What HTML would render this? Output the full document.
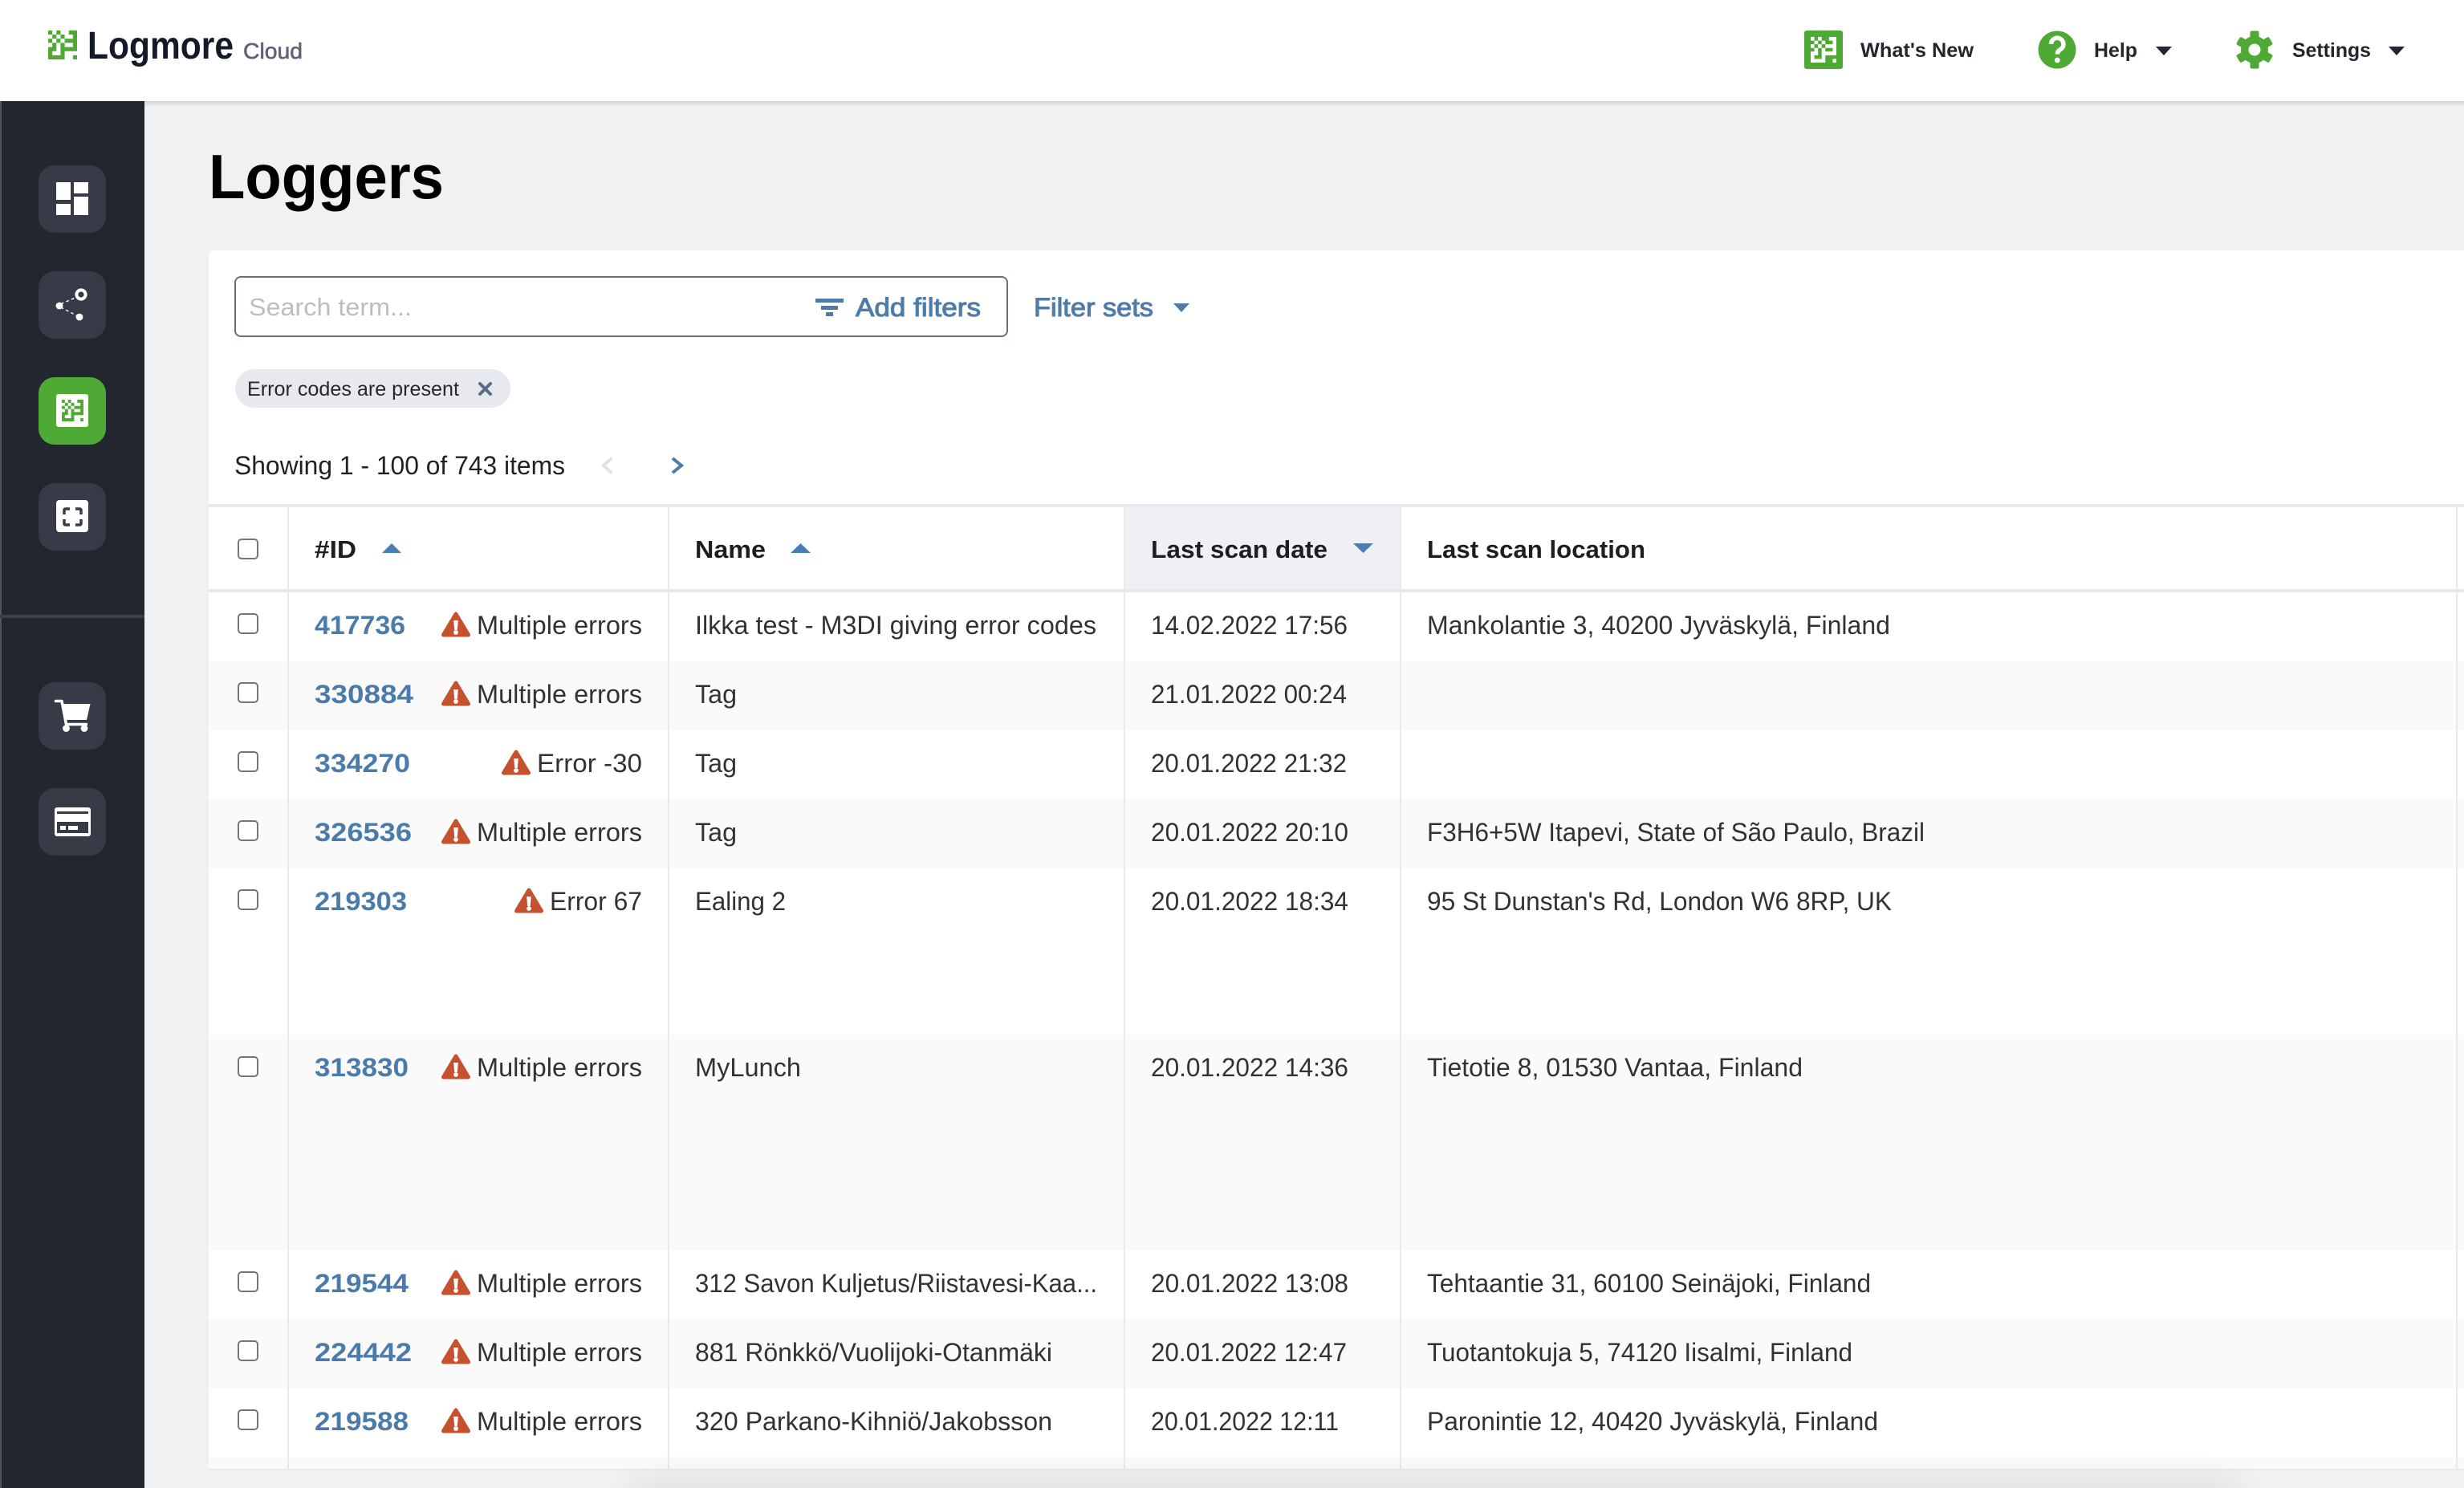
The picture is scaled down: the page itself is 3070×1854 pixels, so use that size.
<!DOCTYPE html>
<html lang="en"><head><meta charset="utf-8"><title>Loggers</title>
<style>
html,body{margin:0;padding:0;background:#f0f1f3;width:3070px;height:1854px;overflow:hidden}
svg{display:block}
text{font-family:"Liberation Sans",sans-serif;white-space:pre}
.r{font-size:32px;fill:#303236}
.i{font-size:32px;font-weight:700;fill:#4a7baa}
.h{font-size:31px;font-weight:700;fill:#1c1e21}
.t{font-size:25px;font-weight:700;fill:#22262e}
.b{font-size:32px;fill:#4d7cab;stroke:#4d7cab;stroke-width:1}
</style></head><body>
<svg xmlns="http://www.w3.org/2000/svg" width="3070" height="1854" viewBox="0 0 3070 1854">
<defs>
<linearGradient id="sh" x1="0" y1="0" x2="0" y2="1"><stop offset="0" stop-color="#000" stop-opacity=".13"/><stop offset="1" stop-color="#000" stop-opacity="0"/></linearGradient>
<filter id="bl" x="-10%" y="-200%" width="120%" height="500%"><feGaussianBlur stdDeviation="22"/></filter>
<symbol id="lg" viewBox="0 0 7 7"><path d="M0 0h1v1h-1zM2 0h1v1h-1zM5 0h2v1h-2zM1 1h1v1h-1zM3 1h1v1h-1zM6 1h1v1h-1zM0 2h1v1h-1zM2 2h1v1h-1zM4 2h3v1h-3zM1 3h1v1h-1zM3 3h1v1h-1zM6 3h1v1h-1zM0 4h2v1h-2zM3 4h4v1h-4zM0 5h1v1h-1zM3 5h1v1h-1zM0 6h4v1h-4zM6 6h1v1h-1z"/></symbol>
<symbol id="w" viewBox="0 0 36 32"><path d="M18 3 33.5 29H2.5z" fill="#c5512f" stroke="#c5512f" stroke-width="5" stroke-linejoin="round"/><path d="M15.2 11h5.6l-1 12h-3.6z" fill="#fff"/><circle cx="18" cy="26" r="2.9" fill="#fff"/></symbol>
<symbol id="c" viewBox="0 0 26 26"><rect x="1" y="1" width="24" height="24" rx="4" fill="#fff" stroke="#767676" stroke-width="2"/></symbol>
</defs>

<rect width="3070" height="1854" fill="#f0f1f3"/>
<rect y="126" width="3070" height="7" fill="url(#sh)"/>
<rect width="3070" height="126" fill="#fff"/>

<!-- logo -->
<use href="#lg" x="60" y="38" width="36" height="36" fill="#4fa935"/>
<text x="109" y="73" font-size="48" font-weight="700" fill="#141a28" textLength="182" lengthAdjust="spacingAndGlyphs">Logmore</text>
<text x="303" y="73" font-size="28" fill="#5c6375" stroke="#5c6375" stroke-width=".6" textLength="74" lengthAdjust="spacingAndGlyphs">Cloud</text>

<!-- top right -->
<rect x="2248" y="38" width="48" height="48" rx="3" fill="#4fa935"/>
<use href="#lg" x="2256" y="46" width="32" height="32" fill="#fff"/>
<text class="t" x="2318" y="71" textLength="141" lengthAdjust="spacingAndGlyphs">What's New</text>
<circle cx="2563" cy="62" r="23.5" fill="#4fa935"/>
<path d="M2555.5 55a7.7 7.7 0 1 1 11.8 6.5c-2.6 1.7-3.9 3-3.9 6" fill="none" stroke="#fff" stroke-width="5.5"/>
<circle cx="2563.3" cy="75" r="3.4" fill="#fff"/>
<text class="t" x="2609" y="71" textLength="54" lengthAdjust="spacingAndGlyphs">Help</text>
<path d="M2686 58h20l-10 11z" fill="#22262e"/>
<g fill="#4fa935" transform="translate(2809 62)">
<path fill-rule="evenodd" d="M-17 0a17 17 0 1 0 34 0a17 17 0 1 0-34 0zM-7.5 0a7.5 7.5 0 1 1 15 0a7.5 7.5 0 1 1-15 0z"/>
<rect x="-5.5" y="-23.5" width="11" height="9" rx="2"/>
<rect x="-5.5" y="-23.5" width="11" height="9" rx="2" transform="rotate(60)"/>
<rect x="-5.5" y="-23.5" width="11" height="9" rx="2" transform="rotate(120)"/>
<rect x="-5.5" y="-23.5" width="11" height="9" rx="2" transform="rotate(180)"/>
<rect x="-5.5" y="-23.5" width="11" height="9" rx="2" transform="rotate(240)"/>
<rect x="-5.5" y="-23.5" width="11" height="9" rx="2" transform="rotate(300)"/>
</g>
<text class="t" x="2856" y="71" textLength="98" lengthAdjust="spacingAndGlyphs">Settings</text>
<path d="M2976 58h20l-10 11z" fill="#22262e"/>

<!-- sidebar -->
<rect y="126" width="180" height="1728" fill="#22262e"/>
<rect y="126" width="2" height="1728" fill="#52555c"/>
<rect y="766" width="180" height="4" fill="#3a3f4b"/>
<rect x="48" y="206" width="84" height="84" rx="20" fill="#363b47"/>
<rect x="48" y="338" width="84" height="84" rx="20" fill="#363b47"/>
<rect x="48" y="470" width="84" height="84" rx="20" fill="#4fa935"/>
<rect x="48" y="602" width="84" height="84" rx="20" fill="#363b47"/>
<rect x="48" y="850" width="84" height="84" rx="20" fill="#363b47"/>
<rect x="48" y="982" width="84" height="84" rx="20" fill="#363b47"/>
<g fill="#fff">
<rect x="70" y="227" width="18" height="22"/><rect x="70" y="254" width="18" height="14"/>
<rect x="92" y="227" width="18" height="14"/><rect x="92" y="245" width="18" height="23"/>
<circle cx="74" cy="381" r="4.4"/><circle cx="99" cy="395" r="4.4"/>
<path d="M76 378.500 96 370M76 383l21 11" stroke="#fff" stroke-width="1.500" stroke-dasharray="3.500 3.500" fill="none"/>
</g>
<circle cx="101" cy="367" r="5.6" fill="#363b47" stroke="#fff" stroke-width="4"/>
<rect x="70" y="491" width="40" height="41" rx="3" fill="#fff"/>
<use href="#lg" x="77" y="498" width="27" height="27" fill="#4fa935"/>
<rect x="70" y="623" width="40" height="40" rx="4" fill="#fff"/>
<path d="M80 641v-5q0-2 2-2h5M94 634h5q2 0 2 2v5M101 647v5q0 2-2 2h-5M87 654h-5q-2 0-2-2v-5" fill="none" stroke="#363b47" stroke-width="3.500"/>
<path d="M69.500 873.500h7.500l5.500 29h25" fill="none" stroke="#fff" stroke-width="3.500" stroke-linecap="round" stroke-linejoin="round"/>
<path d="M77 877H112.500L108 897H81z" fill="#fff"/>
<circle cx="82.500" cy="907.500" r="4.400" fill="#fff"/><circle cx="105" cy="907.500" r="4.400" fill="#fff"/>
<rect x="68" y="1006" width="45" height="36" rx="3" fill="#fff"/>
<rect x="71" y="1011" width="39" height="3" fill="#363b47"/>
<rect x="71" y="1024" width="39" height="14" fill="#363b47"/>
<rect x="75" y="1029" width="7" height="5" fill="#fff"/><rect x="85" y="1029" width="12" height="5" fill="#fff"/>

<!-- title -->
<text x="260" y="247" font-size="78" font-weight="700" fill="#000" textLength="293" lengthAdjust="spacingAndGlyphs">Loggers</text>

<!-- card -->
<path d="M260 1832V320q0-8 8-8H3070V1832z" fill="#fff"/>
<rect x="293" y="345" width="962" height="74" rx="7" fill="#fff" stroke="#66707f" stroke-width="2"/>
<text x="310" y="393" font-size="31" fill="#bdbdbd" textLength="203" lengthAdjust="spacingAndGlyphs">Search term...</text>
<g fill="#4d7cab"><rect x="1016" y="372" width="35" height="5"/><rect x="1023" y="381" width="21" height="5"/><rect x="1029" y="389" width="9" height="5"/></g>
<text class="b" x="1066" y="394" textLength="156" lengthAdjust="spacingAndGlyphs">Add filters</text>
<text class="b" x="1288" y="394" textLength="149" lengthAdjust="spacingAndGlyphs">Filter sets</text>
<path d="M1462 378h20l-10 11z" fill="#4d7cab"/>
<rect x="293" y="460" width="343" height="48" rx="24" fill="#e8e9ee"/>
<text x="308" y="493" font-size="25" fill="#26282c" textLength="264" lengthAdjust="spacingAndGlyphs">Error codes are present</text>
<path d="M598 478 611 491M611 478 598 491" stroke="#5c6b85" stroke-width="4" stroke-linecap="round"/>
<text x="292" y="591" font-size="32" fill="#1f2125" textLength="412" lengthAdjust="spacingAndGlyphs">Showing 1 - 100 of 743 items</text>
<path d="M762 571 752 580 762 589" fill="none" stroke="#e0e1e3" stroke-width="4"/>
<path d="M838 571 849 580 838 589" fill="none" stroke="#4d7cab" stroke-width="4"/>

<!-- table backgrounds -->
<rect x="1400" y="632" width="344" height="102" fill="#eff0f3"/>
<g fill="#fafafa">
<rect x="260" y="824" width="2810" height="86"/>
<rect x="260" y="996" width="2810" height="86"/>
<rect x="260" y="1289" width="2810" height="269"/>
<rect x="260" y="1644" width="2810" height="86"/>
<rect x="260" y="1816" width="2810" height="14"/>
</g>
<g fill="#e8e9ed">
<rect x="358" y="632" width="2" height="1198"/>
<rect x="832" y="632" width="2" height="1198"/>
<rect x="1400" y="632" width="2" height="1198"/>
<rect x="1744" y="632" width="2" height="1198"/>
<rect x="3060" y="632" width="2" height="1198"/>
<rect x="260" y="628" width="2810" height="4"/>
<rect x="260" y="734" width="2810" height="4"/>
<rect x="260" y="1830" width="2810" height="2"/>
</g>

<!-- header -->
<use href="#c" x="296" y="671" width="26" height="26"/>
<text class="h" x="392" y="695" textLength="52" lengthAdjust="spacingAndGlyphs">#ID</text>
<path d="M476 689 488 677 500 689z" fill="#4a7db4"/>
<text class="h" x="866" y="695" textLength="88" lengthAdjust="spacingAndGlyphs">Name</text>
<path d="M985 689 997.500 677 1010 689z" fill="#4a7db4"/>
<text class="h" x="1434" y="695" textLength="220" lengthAdjust="spacingAndGlyphs">Last scan date</text>
<path d="M1686 677H1711L1698.500 689z" fill="#4a7db4"/>
<text class="h" x="1778" y="695" textLength="272" lengthAdjust="spacingAndGlyphs">Last scan location</text>

<!-- row 1 -->
<use href="#c" x="296" y="764" width="26" height="26"/>
<text class="i" x="392" y="790" textLength="113" lengthAdjust="spacingAndGlyphs">417736</text>
<use href="#w" x="550" y="762" width="36" height="32"/>
<text class="r" x="594" y="790" textLength="206" lengthAdjust="spacingAndGlyphs">Multiple errors</text>
<text class="r" x="866" y="790" textLength="500" lengthAdjust="spacingAndGlyphs">Ilkka test - M3DI giving error codes</text>
<text class="r" x="1434" y="790" textLength="245" lengthAdjust="spacingAndGlyphs">14.02.2022 17:56</text>
<text class="r" x="1778" y="790" textLength="577" lengthAdjust="spacingAndGlyphs">Mankolantie 3, 40200 Jyväskylä, Finland</text>
<!-- row 2 -->
<use href="#c" x="296" y="850" width="26" height="26"/>
<text class="i" x="392" y="876" textLength="123" lengthAdjust="spacingAndGlyphs">330884</text>
<use href="#w" x="550" y="848" width="36" height="32"/>
<text class="r" x="594" y="876" textLength="206" lengthAdjust="spacingAndGlyphs">Multiple errors</text>
<text class="r" x="866" y="876" textLength="52" lengthAdjust="spacingAndGlyphs">Tag</text>
<text class="r" x="1434" y="876" textLength="244" lengthAdjust="spacingAndGlyphs">21.01.2022 00:24</text>
<!-- row 3 -->
<use href="#c" x="296" y="936" width="26" height="26"/>
<text class="i" x="392" y="962" textLength="119" lengthAdjust="spacingAndGlyphs">334270</text>
<use href="#w" x="625" y="934" width="36" height="32"/>
<text class="r" x="669" y="962" textLength="131" lengthAdjust="spacingAndGlyphs">Error -30</text>
<text class="r" x="866" y="962" textLength="52" lengthAdjust="spacingAndGlyphs">Tag</text>
<text class="r" x="1434" y="962" textLength="244" lengthAdjust="spacingAndGlyphs">20.01.2022 21:32</text>
<!-- row 4 -->
<use href="#c" x="296" y="1022" width="26" height="26"/>
<text class="i" x="392" y="1048" textLength="121" lengthAdjust="spacingAndGlyphs">326536</text>
<use href="#w" x="550" y="1020" width="36" height="32"/>
<text class="r" x="594" y="1048" textLength="206" lengthAdjust="spacingAndGlyphs">Multiple errors</text>
<text class="r" x="866" y="1048" textLength="52" lengthAdjust="spacingAndGlyphs">Tag</text>
<text class="r" x="1434" y="1048" textLength="246" lengthAdjust="spacingAndGlyphs">20.01.2022 20:10</text>
<text class="r" x="1778" y="1048" textLength="620" lengthAdjust="spacingAndGlyphs">F3H6+5W Itapevi, State of São Paulo, Brazil</text>
<!-- row 5 -->
<use href="#c" x="296" y="1108" width="26" height="26"/>
<text class="i" x="392" y="1134" textLength="115" lengthAdjust="spacingAndGlyphs">219303</text>
<use href="#w" x="641" y="1106" width="36" height="32"/>
<text class="r" x="685" y="1134" textLength="115" lengthAdjust="spacingAndGlyphs">Error 67</text>
<text class="r" x="866" y="1134" textLength="113" lengthAdjust="spacingAndGlyphs">Ealing 2</text>
<text class="r" x="1434" y="1134" textLength="246" lengthAdjust="spacingAndGlyphs">20.01.2022 18:34</text>
<text class="r" x="1778" y="1134" textLength="579" lengthAdjust="spacingAndGlyphs">95 St Dunstan's Rd, London W6 8RP, UK</text>
<!-- row 6 -->
<use href="#c" x="296" y="1316" width="26" height="26"/>
<text class="i" x="392" y="1341" textLength="117" lengthAdjust="spacingAndGlyphs">313830</text>
<use href="#w" x="550" y="1313" width="36" height="32"/>
<text class="r" x="594" y="1341" textLength="206" lengthAdjust="spacingAndGlyphs">Multiple errors</text>
<text class="r" x="866" y="1341" textLength="132" lengthAdjust="spacingAndGlyphs">MyLunch</text>
<text class="r" x="1434" y="1341" textLength="246" lengthAdjust="spacingAndGlyphs">20.01.2022 14:36</text>
<text class="r" x="1778" y="1341" textLength="468" lengthAdjust="spacingAndGlyphs">Tietotie 8, 01530 Vantaa, Finland</text>
<!-- row 7 -->
<use href="#c" x="296" y="1584" width="26" height="26"/>
<text class="i" x="392" y="1610" textLength="117" lengthAdjust="spacingAndGlyphs">219544</text>
<use href="#w" x="550" y="1582" width="36" height="32"/>
<text class="r" x="594" y="1610" textLength="206" lengthAdjust="spacingAndGlyphs">Multiple errors</text>
<text class="r" x="866" y="1610" textLength="501" lengthAdjust="spacingAndGlyphs">312 Savon Kuljetus/Riistavesi-Kaa...</text>
<text class="r" x="1434" y="1610" textLength="246" lengthAdjust="spacingAndGlyphs">20.01.2022 13:08</text>
<text class="r" x="1778" y="1610" textLength="553" lengthAdjust="spacingAndGlyphs">Tehtaantie 31, 60100 Seinäjoki, Finland</text>
<!-- row 8 -->
<use href="#c" x="296" y="1670" width="26" height="26"/>
<text class="i" x="392" y="1696" textLength="121" lengthAdjust="spacingAndGlyphs">224442</text>
<use href="#w" x="550" y="1668" width="36" height="32"/>
<text class="r" x="594" y="1696" textLength="206" lengthAdjust="spacingAndGlyphs">Multiple errors</text>
<text class="r" x="866" y="1696" textLength="445" lengthAdjust="spacingAndGlyphs">881 Rönkkö/Vuolijoki-Otanmäki</text>
<text class="r" x="1434" y="1696" textLength="244" lengthAdjust="spacingAndGlyphs">20.01.2022 12:47</text>
<text class="r" x="1778" y="1696" textLength="530" lengthAdjust="spacingAndGlyphs">Tuotantokuja 5, 74120 Iisalmi, Finland</text>
<!-- row 9 -->
<use href="#c" x="296" y="1756" width="26" height="26"/>
<text class="i" x="392" y="1782" textLength="117" lengthAdjust="spacingAndGlyphs">219588</text>
<use href="#w" x="550" y="1754" width="36" height="32"/>
<text class="r" x="594" y="1782" textLength="206" lengthAdjust="spacingAndGlyphs">Multiple errors</text>
<text class="r" x="866" y="1782" textLength="445" lengthAdjust="spacingAndGlyphs">320 Parkano-Kihniö/Jakobsson</text>
<text class="r" x="1434" y="1782" textLength="234" lengthAdjust="spacingAndGlyphs">20.01.2022 12:11</text>
<text class="r" x="1778" y="1782" textLength="562" lengthAdjust="spacingAndGlyphs">Paronintie 12, 40420 Jyväskylä, Finland</text>

<!-- bottom shadow -->
<rect x="790" y="1848" width="2000" height="60" fill="#000" opacity=".08" filter="url(#bl)"/>
</svg>
</body></html>
